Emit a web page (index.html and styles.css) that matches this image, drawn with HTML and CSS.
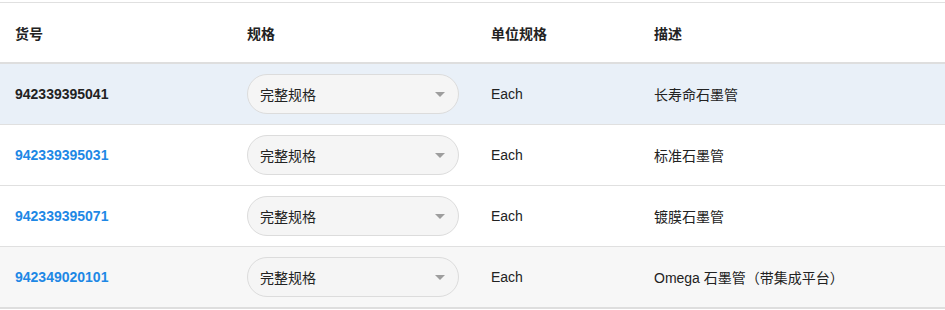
FILE: index.html
```html
<!DOCTYPE html>
<html lang="zh-CN">
<head>
  <meta charset="UTF-8" />
  <meta name="viewport" content="width=device-width, initial-scale=1" />
  <title>石墨管</title>
  <link rel="stylesheet" href="styles.css">
</head>
<body>
  <table class="parts">
    <colgroup>
      <col class="col-sku">
      <col class="col-spec">
      <col class="col-unit">
      <col class="col-desc">
    </colgroup>
    <thead>
      <tr>
        <th>货号</th>
        <th>规格</th>
        <th>单位规格</th>
        <th>描述</th>
      </tr>
    </thead>
    <tbody>
      <tr class="selected">
        <td><a class="sku" href="#">942339395041</a></td>
        <td>
          <div class="spec-select">
            <span>完整规格</span>
            <i class="caret"></i>
          </div>
        </td>
        <td>Each</td>
        <td>长寿命石墨管</td>
      </tr>
      <tr>
        <td><a class="sku" href="#">942339395031</a></td>
        <td>
          <div class="spec-select">
            <span>完整规格</span>
            <i class="caret"></i>
          </div>
        </td>
        <td>Each</td>
        <td>标准石墨管</td>
      </tr>
      <tr>
        <td><a class="sku" href="#">942339395071</a></td>
        <td>
          <div class="spec-select">
            <span>完整规格</span>
            <i class="caret"></i>
          </div>
        </td>
        <td>Each</td>
        <td>镀膜石墨管</td>
      </tr>
      <tr class="hover">
        <td><a class="sku" href="#">942349020101</a></td>
        <td>
          <div class="spec-select">
            <span>完整规格</span>
            <i class="caret"></i>
          </div>
        </td>
        <td>Each</td>
        <td>Omega 石墨管（带集成平台）</td>
      </tr>
    </tbody>
  </table>
</body>
</html>
```

FILE: styles.css
```css
body {
  margin: 0;
  padding-top: 2px;
  font-family: "Liberation Sans", Arial, "Noto Sans CJK SC", sans-serif;
  font-size: 14px;
  color: #222;
  background: #fff;
}

.parts {
  width: 100%;
  border-collapse: collapse;
  table-layout: fixed;
  border-top: 1px solid #e0e0e0;
  border-bottom: 2px solid #dedede;
}

.col-sku { width: 232px; }
.col-spec { width: 244px; }
.col-unit { width: 163px; }

.parts th {
  height: 59px;
  padding: 0 15px;
  text-align: left;
  font-weight: 700;
  color: #222;
  border-bottom: 2px solid #dedede;
}

.parts td {
  height: 60px;
  padding: 0 15px;
  border-bottom: 1px solid #e0e0e0;
  vertical-align: middle;
}

.parts tbody tr:last-child td {
  border-bottom: none;
}

.parts tr.selected td {
  background: #e9f0f8;
}

.parts tr.hover td {
  background: #f7f7f7;
}

.sku {
  font-weight: 700;
  color: #1e88e5;
  text-decoration: none;
}

.selected .sku {
  color: #222;
}

.spec-select {
  display: flex;
  align-items: center;
  justify-content: space-between;
  box-sizing: border-box;
  width: 212px;
  height: 40px;
  padding: 0 13px 0 12px;
  background: #f5f5f5;
  border: 1px solid #dcdcdc;
  border-radius: 20px;
  color: #222;
}

.caret {
  width: 0;
  height: 0;
  border-left: 5px solid transparent;
  border-right: 5px solid transparent;
  border-top: 5px solid #9e9e9e;
}
```
